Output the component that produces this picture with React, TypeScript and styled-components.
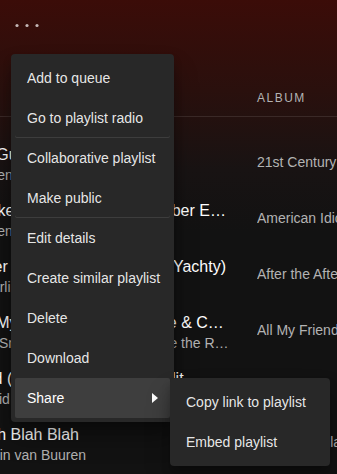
import React from "react"
import styled, { createGlobalStyle } from "styled-components"

const GlobalStyle = createGlobalStyle`
  html, body {
    margin: 0;
    padding: 0;
    background: #121212;
    overflow: hidden;
  }
  body {
    font-family: "Liberation Sans", Arial, sans-serif;
    -webkit-font-smoothing: antialiased;
  }
`

const Page = styled.div`
  position: relative;
  width: 337px;
  height: 474px;
  overflow: hidden;
  background: linear-gradient(180deg, #3b0c08 0px, #2a100d 90px, #181313 170px, #121212 232px);
  color: #fff;
`

const ActionBar = styled.div`
  box-sizing: border-box;
  height: 80px;
  padding: 10px 0 0 11px;
`

const MoreButton = styled.button`
  display: block;
  width: 32px;
  height: 32px;
  padding: 0;
  border: 0;
  background: none;
  color: rgba(255, 255, 255, 0.7);
  cursor: pointer;
`

// the list is scrolled sideways, so the first columns sit past the left edge
const TrackList = styled.div`
  margin-left: -26px;
`

const HeaderRow = styled.div`
  display: grid;
  grid-template-columns: 256px 1fr;
  column-gap: 27px;
  align-items: center;
  height: 36px;
  border-bottom: 1px solid rgba(255, 255, 255, 0.1);
  margin-bottom: 17px;
`

const HeaderCell = styled.div`
  font-size: 12px;
  letter-spacing: 1.5px;
  text-transform: uppercase;
  color: #b3b3b3;
  white-space: nowrap;
`

const Row = styled.div`
  display: grid;
  grid-template-columns: 256px 1fr;
  column-gap: 27px;
  align-items: center;
  height: 56px;
`

const TitleCell = styled.div`
  display: flex;
  flex-direction: column;
  padding-top: 6px;
  min-width: 0;
`

const TrackName = styled.div`
  font-size: 16px;
  line-height: 20px;
  color: #fff;
  white-space: nowrap;
  overflow: hidden;
  text-overflow: ellipsis;
`

const ArtistLine = styled.div`
  display: flex;
  align-items: center;
  gap: 8px;
  min-width: 0;
`

const Explicit = styled.span`
  flex: none;
  display: inline-flex;
  align-items: center;
  justify-content: center;
  width: 17px;
  height: 16px;
  border-radius: 2px;
  background: rgba(255, 255, 255, 0.6);
  color: #121212;
  font-size: 10px;
  font-weight: 700;
`

const Artist = styled.div`
  font-size: 14px;
  line-height: 20px;
  color: #b3b3b3;
  white-space: nowrap;
  overflow: hidden;
  text-overflow: ellipsis;
`

const Album = styled.div`
  font-size: 14px;
  color: #b3b3b3;
  white-space: nowrap;
  overflow: hidden;
`

const Menu = styled.ul<{ $top: number; $left: number; $width: number }>`
  position: absolute;
  top: ${(p) => p.$top}px;
  left: ${(p) => p.$left}px;
  width: ${(p) => p.$width}px;
  box-sizing: border-box;
  margin: 0;
  padding: 4px;
  list-style: none;
  background: #282828;
  border-radius: 4px;
  box-shadow: 0 16px 24px rgba(0, 0, 0, 0.3), 0 6px 8px rgba(0, 0, 0, 0.2);
  z-index: 10;
`

const MenuItem = styled.li<{ $divider?: boolean; $active?: boolean }>`
  position: relative;
  display: flex;
  align-items: center;
  justify-content: space-between;
  height: 40px;
  padding: 0 12px;
  border-radius: 2px;
  font-size: 14px;
  color: ${(p) => (p.$active ? "#fff" : "rgba(255, 255, 255, 0.9)")};
  background: ${(p) => (p.$active ? "#3e3e3e" : "transparent")};
  box-shadow: ${(p) => (p.$divider ? "inset 0 -1px 0 rgba(255, 255, 255, 0.1)" : "none")};
  white-space: nowrap;
  cursor: default;
`

const SubMenu = styled(Menu)`
  top: 0;
  left: 100%;
`

const tracks = [
  { title: "21 Guns", artist: "Green Day", album: "21st Century Breakdown" },
  { title: "Wake Me Up When September Ends", artist: "Green Day", album: "American Idiot" },
  { title: "After the Afterparty (feat. Lil Yachty)", artist: "Charli XCX, Lil Yachty", album: "After the Afterparty" },
  {
    title: "All My Friends (feat. Tinashe & Chance the Rapper)",
    artist: "Snakehips, Tinashe, Chance the Rapper",
    album: "All My Friends",
    explicit: true,
  },
  { title: "Bad (feat. Vassy) - Radio Edit", artist: "David Guetta, Showtek, VASSY", album: "Listen" },
  { title: "Blah Blah Blah", artist: "Armin van Buuren", album: "Blah Blah Blah" },
]

const menuItems = [
  { label: "Add to queue" },
  { label: "Go to playlist radio", divider: true },
  { label: "Collaborative playlist" },
  { label: "Make public", divider: true },
  { label: "Edit details" },
  { label: "Create similar playlist" },
  { label: "Delete" },
  { label: "Download" },
]

const shareItems = ["Copy link to playlist", "Embed playlist"]

const MoreIcon = () => (
  <svg width="32" height="32" viewBox="0 0 32 32" fill="currentColor">
    <circle cx="6" cy="15.5" r="1.6" />
    <circle cx="16" cy="15.5" r="1.6" />
    <circle cx="26" cy="15.5" r="1.6" />
  </svg>
)

const CaretRight = () => (
  <svg width="6" height="10" viewBox="0 0 6 10" fill="currentColor">
    <path d="M0 0 L6 5 L0 10 Z" />
  </svg>
)

export default function App() {
  return (
    <>
      <GlobalStyle />
      <Page>
        <ActionBar>
          <MoreButton aria-label="More options">
            <MoreIcon />
          </MoreButton>
        </ActionBar>

        <TrackList>
          <HeaderRow>
            <HeaderCell />
            <HeaderCell>Album</HeaderCell>
          </HeaderRow>
          {tracks.map((t) => (
            <Row key={t.title}>
              <TitleCell>
                <TrackName>{t.title}</TrackName>
                <ArtistLine>
                  {t.explicit && <Explicit>E</Explicit>}
                  <Artist>{t.artist}</Artist>
                </ArtistLine>
              </TitleCell>
              <Album>{t.album}</Album>
            </Row>
          ))}
        </TrackList>

        <Menu $top={54} $left={11} $width={163}>
          {menuItems.map((item) => (
            <MenuItem key={item.label} $divider={item.divider}>
              {item.label}
            </MenuItem>
          ))}
          <MenuItem $active>
            Share
            <CaretRight />
            <SubMenu $top={0} $left={0} $width={160}>
              {shareItems.map((label) => (
                <MenuItem key={label}>{label}</MenuItem>
              ))}
            </SubMenu>
          </MenuItem>
        </Menu>
      </Page>
    </>
  )
}
